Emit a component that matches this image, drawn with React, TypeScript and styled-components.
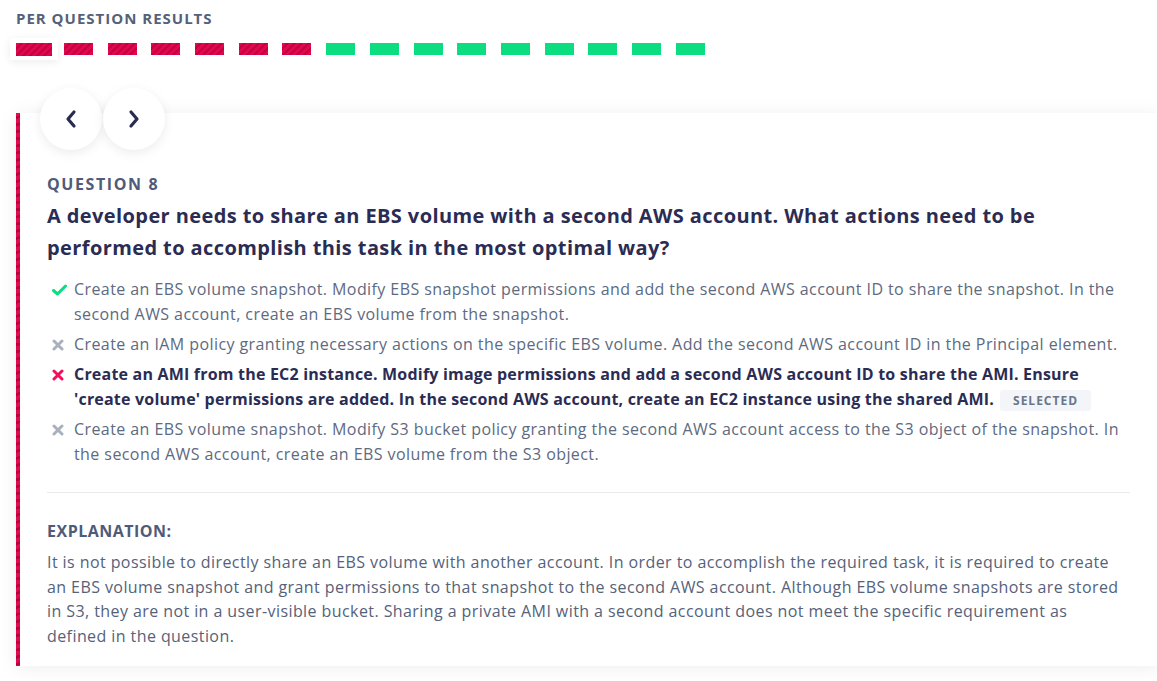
import React from "react";
import styled, { createGlobalStyle } from "styled-components";

const Global = createGlobalStyle`
  html, body { margin: 0; padding: 0; background: #ffffff; }
  body { overflow: hidden; font-family: "Open Sans", "Noto Sans", sans-serif; }
  * { box-sizing: border-box; }
`;

const Page = styled.div`
  width: 1157px;
  height: 681px;
  padding: 8px 0 0 16px;
  overflow: hidden;
`;

const SectionTitle = styled.div`
  font-size: 15px;
  font-weight: 700;
  letter-spacing: 1px;
  color: #55617a;
  text-transform: uppercase;
  line-height: 20px;
`;

const BarRow = styled.div`
  display: flex;
  align-items: center;
  height: 22px;
  margin-top: 10px;
  margin-left: -6px;
`;

const BarSlot = styled.div<{ $active?: boolean }>`
  width: ${(p) => (p.$active ? "48px" : "29px")};
  height: 22px;
  margin-right: ${(p) => (p.$active ? "6px" : "14.7px")};
  display: flex;
  align-items: center;
  justify-content: center;
  background: ${(p) => (p.$active ? "#ffffff" : "transparent")};
  box-shadow: ${(p) => (p.$active ? "0 2px 8px rgba(0,0,0,0.08)" : "none")};
`;

const Bar = styled.div<{ $ok: boolean; $active?: boolean }>`
  width: ${(p) => (p.$active ? "36px" : "29px")};
  height: ${(p) => (p.$active ? "13px" : "12px")};
  background: ${(p) =>
    p.$ok
      ? "#0bdd80"
      : "repeating-linear-gradient(135deg, #e2064f 0px, #e2064f 3px, #c4003f 3px, #c4003f 5px)"};
`;

const Card = styled.div`
  margin-top: 53px;
  width: 1145px;
  display: flex;
  flex-direction: column;
  background: #ffffff;
  border-left: 4px solid #d6004a;
  border-image: repeating-linear-gradient(135deg, #e4084f 0px, #e4084f 3px, #b8003c 3px, #b8003c 5px) 1;
  box-shadow: 0 2px 18px rgba(0, 0, 0, 0.07);
  padding: 0 31px 17px 27px;
`;

const NavRow = styled.div`
  display: flex;
  gap: 1px;
  margin-top: -25px;
  margin-left: -7px;
`;

const NavButton = styled.button`
  width: 62px;
  height: 62px;
  border-radius: 50%;
  border: none;
  background: #ffffff;
  box-shadow: 0 3px 12px rgba(0, 0, 0, 0.08);
  display: flex;
  align-items: center;
  justify-content: center;
  padding: 0;
  cursor: pointer;
`;

const QLabel = styled.div`
  margin-top: 24px;
  font-size: 16px;
  font-weight: 700;
  letter-spacing: 1.6px;
  line-height: 20px;
  color: #4f5b77;
  text-transform: uppercase;
`;

const QTitle = styled.h2`
  margin: 6px 0 0;
  font-size: 20px;
  font-weight: 700;
  line-height: 32px;
  letter-spacing: 0.4px;
  color: #2b2c53;
`;

const Options = styled.ul`
  list-style: none;
  margin: 13px 0 0;
  padding: 0;
  display: flex;
  flex-direction: column;
  gap: 5px;
`;

const Option = styled.li<{ $selected?: boolean }>`
  display: flex;
  align-items: flex-start;
  font-size: 16px;
  line-height: 25px;
  letter-spacing: ${(p) => (p.$selected ? "0.2px" : "0.42px")};
  color: ${(p) => (p.$selected ? "#2b2c53" : "#5d6a80")};
  font-weight: ${(p) => (p.$selected ? 700 : 400)};
`;

const IconBox = styled.span`
  flex: 0 0 27px;
  height: 25px;
  display: flex;
  align-items: center;
  padding-left: 5px;
`;

const Badge = styled.span`
  display: inline-block;
  margin-left: 6px;
  padding: 0 13px;
  height: 21px;
  line-height: 21px;
  font-size: 12px;
  font-weight: 700;
  letter-spacing: 1px;
  color: #6b7689;
  background: #f3f5f8;
  border-radius: 3px;
  vertical-align: 0;
`;

const Divider = styled.hr`
  margin: 25px 0 0;
  border: none;
  border-top: 1px solid #e8e9ec;
`;

const ExplLabel = styled.div`
  margin-top: 28px;
  font-size: 16px;
  font-weight: 700;
  letter-spacing: 0.5px;
  line-height: 20px;
  color: #4f5b77;
`;

const ExplText = styled.p`
  margin: 9px 0 0;
  font-size: 16px;
  line-height: 24.7px;
  letter-spacing: 0.42px;
  color: #55627a;
`;

const Check = () => (
  <svg width="15" height="12" viewBox="0 0 15 12">
    <path d="M1.5 6.5 L5.5 10 L13.5 2" fill="none" stroke="#0bdd80" strokeWidth="3" strokeLinecap="round" strokeLinejoin="round" />
  </svg>
);

const Cross = ({ color }: { color: string }) => (
  <svg width="12" height="12" viewBox="0 0 12 12">
    <path d="M2 2 L10 10 M10 2 L2 10" fill="none" stroke={color} strokeWidth="3" strokeLinecap="round" />
  </svg>
);

const Chevron = ({ dir }: { dir: "left" | "right" }) => (
  <svg width="14" height="20" viewBox="0 0 14 20">
    <path
      d={dir === "left" ? "M10 3 L4 10 L10 17" : "M4 3 L10 10 L4 17"}
      fill="none"
      stroke="#2a2b52"
      strokeWidth="3.2"
      strokeLinecap="round"
      strokeLinejoin="round"
    />
  </svg>
);

const results = [false, false, false, false, false, false, false, true, true, true, true, true, true, true, true, true];

export default function App() {
  return (
    <Page>
      <Global />
      <SectionTitle>Per Question Results</SectionTitle>
      <BarRow>
        {results.map((ok, i) => (
          <BarSlot key={i} $active={i === 0}>
            <Bar $ok={ok} $active={i === 0} />
          </BarSlot>
        ))}
      </BarRow>
      <Card>
        <NavRow>
          <NavButton aria-label="Previous">
            <Chevron dir="left" />
          </NavButton>
          <NavButton aria-label="Next">
            <Chevron dir="right" />
          </NavButton>
        </NavRow>
        <QLabel>Question 8</QLabel>
        <QTitle>
          A developer needs to share an EBS volume with a second AWS account. What actions need to be performed to
          accomplish this task in the most optimal way?
        </QTitle>
        <Options>
          <Option>
            <IconBox>
              <Check />
            </IconBox>
            <span>
              Create an EBS volume snapshot. Modify EBS snapshot permissions and add the second AWS account ID to share
              the snapshot. In the second AWS account, create an EBS volume from the snapshot.
            </span>
          </Option>
          <Option>
            <IconBox>
              <Cross color="#a9b1be" />
            </IconBox>
            <span>
              Create an IAM policy granting necessary actions on the specific EBS volume. Add the second AWS account ID
              in the Principal element.
            </span>
          </Option>
          <Option $selected>
            <IconBox>
              <Cross color="#f0105a" />
            </IconBox>
            <span>
              Create an AMI from the EC2 instance. Modify image permissions and add a second AWS account ID to share the
              AMI. Ensure 'create volume' permissions are added. In the second AWS account, create an EC2 instance using
              the shared AMI.
              <Badge>SELECTED</Badge>
            </span>
          </Option>
          <Option>
            <IconBox>
              <Cross color="#a9b1be" />
            </IconBox>
            <span>
              Create an EBS volume snapshot. Modify S3 bucket policy granting the second AWS account access to the S3
              object of the snapshot. In the second AWS account, create an EBS volume from the S3 object.
            </span>
          </Option>
        </Options>
        <Divider />
        <ExplLabel>EXPLANATION:</ExplLabel>
        <ExplText>
          It is not possible to directly share an EBS volume with another account. In order to accomplish the required
          task, it is required to create an EBS volume snapshot and grant permissions to that snapshot to the second AWS
          account. Although EBS volume snapshots are stored in S3, they are not in a user-visible bucket. Sharing a
          private AMI with a second account does not meet the specific requirement as defined in the question.
        </ExplText>
      </Card>
    </Page>
  );
}
